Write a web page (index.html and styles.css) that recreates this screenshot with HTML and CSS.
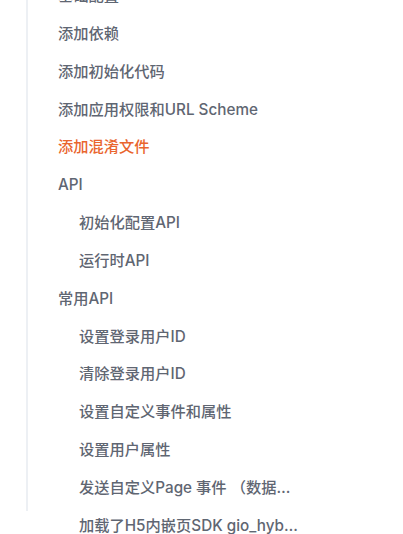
FILE: index.html
```html
<!DOCTYPE html>
<html lang="zh">
<head>
<meta charset="utf-8">
<link rel="stylesheet" href="styles.css">
</head>
<body>
<nav class="toc">
  <ul class="toc-list">
    <li class="toc-item">基础配置</li>
    <li class="toc-item">添加依赖</li>
    <li class="toc-item">添加初始化代码</li>
    <li class="toc-item">添加应用权限和URL Scheme</li>
    <li class="toc-item active">添加混淆文件</li>
    <li class="toc-item">API</li>
    <li class="toc-item sub">初始化配置API</li>
    <li class="toc-item sub">运行时API</li>
    <li class="toc-item">常用API</li>
    <li class="toc-item sub">设置登录用户ID</li>
    <li class="toc-item sub">清除登录用户ID</li>
    <li class="toc-item sub">设置自定义事件和属性</li>
    <li class="toc-item sub">设置用户属性</li>
    <li class="toc-item sub">发送自定义Page 事件 （数据采集）</li>
    <li class="toc-item sub">加载了H5内嵌页SDK gio_hybrid.js</li>
  </ul>
</nav>
</body>
</html>
```
FILE: styles.css
```css
html, body {
  margin: 0;
  padding: 0;
  background: #ffffff;
  overflow: hidden;
}
body {
  height: 534px;
  font-family: Inter, "Noto Sans CJK SC", sans-serif;
}
.toc {
  margin-left: 26px;
  width: 276px;
  height: 534px;
  border-left: 2px solid #edf0f4;
  box-sizing: border-box;
}
.toc-list {
  list-style: none;
  margin: -23px 0 0 0;
  padding: 0 0 0 30px;
}
.toc-item {
  height: 37.85px;
  line-height: 37.85px;
  font-size: 15.25px;
  font-weight: 500;
  color: #5f6672;
  white-space: nowrap;
  overflow: hidden;
  text-overflow: ellipsis;
}
.toc-item.sub {
  padding-left: 21px;
}
.toc-item.active {
  color: #e9652e;
}
```
